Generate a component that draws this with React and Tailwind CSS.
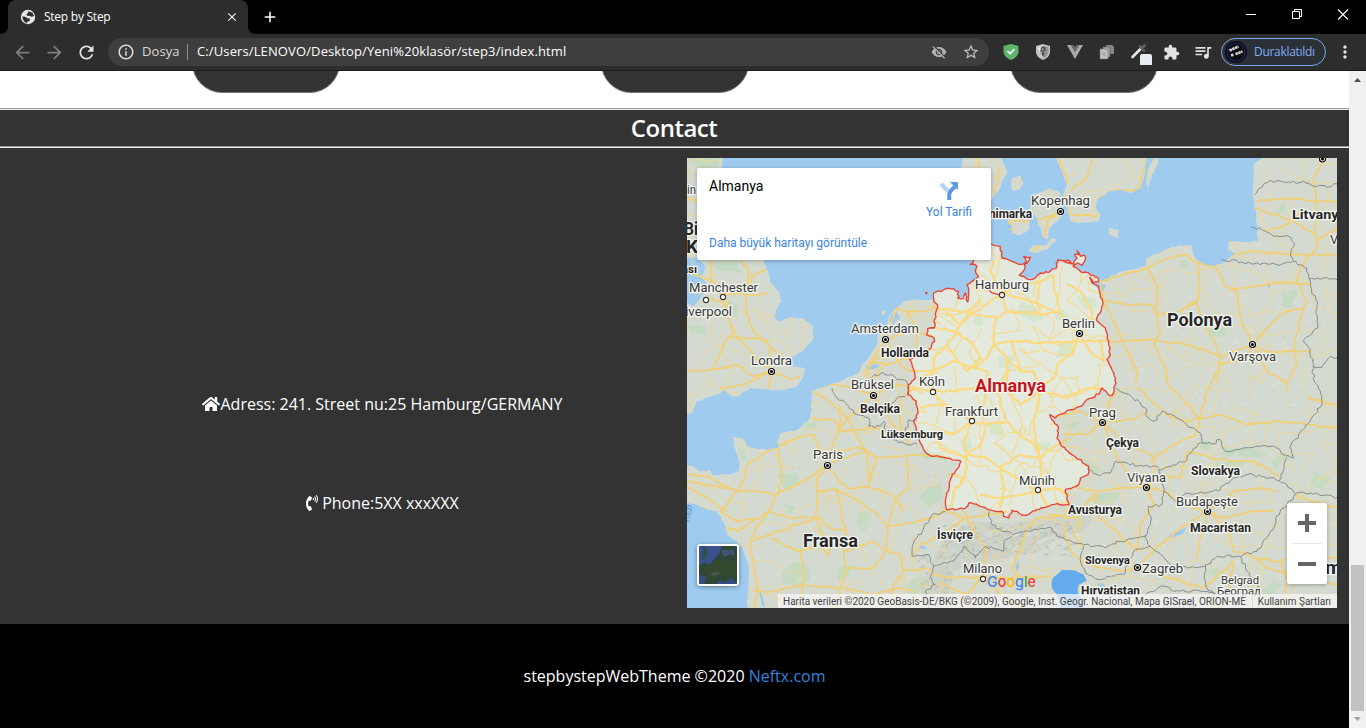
import React from "react";
import {
  MdArrowBack, MdArrowForward, MdRefresh, MdInfoOutline, MdVisibilityOff, MdStarBorder,
  MdExtension, MdQueueMusic, MdPublic, MdClose, MdAdd, MdMoreVert,
} from "react-icons/md";
import { FaHome, FaPhoneVolume } from "react-icons/fa";

/* ---------- map geometry (drawn at three units per pixel) ---------- */

function rng(seed) {
  let s = seed;
  return () => {
    s = (s * 16807) % 2147483647;
    return s / 2147483647;
  };
}

function parse(str) {
  return str.trim().split(/\s+/).map((p) => p.split(",").map(Number));
}

function wiggle(str, amp, step, close) {
  const pts = parse(str);
  if (close) pts.push(pts[0]);
  const r = rng(Math.round(pts[0][0] * 31 + pts[0][1] * 17 + pts.length * 97) + 11);
  let d = `M${pts[0][0]},${pts[0][1]}`;
  for (let i = 1; i < pts.length; i++) {
    const [x0, y0] = pts[i - 1];
    const [x1, y1] = pts[i];
    const n = Math.max(1, Math.round(Math.hypot(x1 - x0, y1 - y0) / step));
    for (let k = 1; k <= n; k++) {
      const t = k / n;
      const j = k === n ? 0 : amp;
      d += `L${(x0 + (x1 - x0) * t + (r() - 0.5) * 2 * j).toFixed(1)},${(y0 + (y1 - y0) * t + (r() - 0.5) * 2 * j).toFixed(1)}`;
    }
  }
  return close ? d + "Z" : d;
}

const LAND = [
  "-10,-10 105,-10 108,0 100,40 150,100 200,200 230,306 245,345 250,375 275,400 285,430 268,455 262,480 280,490 310,478 345,480 378,505 378,545 345,580 310,600 300,622 328,626 355,632 350,655 330,685 290,697 245,695 190,690 150,717 135,715 115,697 75,715 30,730 15,765 -10,773",
  "830,-10 820,40 830,150 850,230 850,306 870,325 865,345 875,355 855,372 842,380 845,410 815,420 812,400 775,393 740,405 742,428 690,425 650,430 628,450 605,475 600,510 575,512 570,560 545,600 525,620 520,640 495,655 440,676 375,700 370,780 345,805 320,820 280,825 270,850 275,870 240,877 180,865 165,840 135,835 145,875 155,905 155,940 130,950 75,950 70,935 40,940 20,925 -10,925 -10,1030 30,1040 60,1055 90,1060 100,1075 115,1105 120,1130 150,1150 160,1165 175,1195 185,1220 185,1275 180,1360 1960,1360 1960,-10 1735,-10 1700,20 1697,100 1703,150 1710,200 1712,250 1665,252 1625,250 1623,275 1645,285 1615,312 1580,325 1535,310 1520,290 1515,262 1475,262 1435,275 1380,300 1375,325 1305,340 1245,370 1220,350 1205,345 1180,340 1160,312 1125,305 1110,325 1090,340 1060,345 1045,362 1000,355 1010,330 1000,320 975,310 945,300 940,265 912,258 905,215 912,130 940,90 960,40 940,-10",
  "1105,-10 1125,40 1140,80 1130,110 1140,150 1150,190 1175,195 1235,190 1240,170 1225,150 1230,125 1260,105 1295,95 1335,105 1360,90 1375,40 1380,-10",
  "1040,110 1090,90 1120,105 1125,170 1110,190 1085,215 1085,245 1065,235 1050,180 1025,165",
  "1025,275 1045,262 1080,260 1095,240 1110,245 1080,275 1040,285",
  "965,170 1000,160 1030,185 1025,215 1000,232 965,225",
  "975,60 1000,52 1010,75 995,95 975,98",
  "1405,-10 1415,10 1395,50 1382,92 1378,60 1388,20",
  "1268,208 1296,216 1293,242 1265,230",
  "585,460 595,455 592,470 585,470",
];

const GERMANY =
  "912,258 940,265 945,300 975,310 1000,320 1018,312 1010,295 1030,297 1020,315 1012,320 1012,335 997,352 1035,365 1045,360 1060,345 1090,340 1110,325 1112,305 1150,310 1152,318 1130,310 1160,320 1170,300 1163,290 1175,290 1170,278 1180,295 1193,292 1195,305 1185,322 1172,315 1158,325 1180,340 1205,345 1212,352 1232,358 1235,370 1215,375 1208,358 1220,378 1235,385 1240,410 1247,440 1240,465 1228,485 1255,510 1265,550 1270,590 1260,605 1280,645 1287,675 1275,713 1262,708 1245,690 1237,708 1205,722 1180,745 1140,758 1105,780 1088,770 1095,785 1115,810 1110,840 1125,865 1155,890 1205,925 1203,950 1180,960 1175,980 1135,995 1140,1020 1147,1040 1095,1040 1050,1055 1015,1072 990,1060 975,1057 965,1080 950,1075 945,1060 925,1060 880,1045 845,1035 835,1050 780,1055 775,1030 790,965 822,910 780,900 725,890 700,855 690,820 680,790 693,765 688,730 665,710 665,680 685,660 675,620 668,605 725,575 743,550 735,535 718,530 722,512 742,510 745,470 752,440 740,430 740,405 775,393 800,392 815,400 812,420 828,422 835,405 842,432 845,400 840,380 855,370 875,355 865,340 870,325 850,320 860,306 880,270";

const WATERS = [
  "-10,300 35,300 55,330 45,360 62,385 45,415 20,445 -10,425",
  "612,470 630,462 640,480 618,500 608,492",
  "1095,1265 1125,1235 1165,1238 1190,1250 1200,1268 1175,1280 1172,1300 1185,1330 1195,1360 1125,1360 1110,1310 1095,1290",
  "1225,368 1240,375 1256,382 1250,400 1235,395 1222,378",
  "1443,1135 1490,1110 1500,1108 1490,1125 1450,1142",
  "690,1168 705,1162 728,1170 712,1174",
  "120,1180 165,1165 172,1190 185,1225 182,1260 160,1240",
  "905,190 925,170 955,185 975,205 975,240 950,225 925,205",
  "535,625 570,618 580,628 548,634",
  "1738,380 1752,378 1748,390 1738,388",
  "212,1285 225,1310 235,1350 224,1340",
  "1230,1280 1250,1275 1255,1290 1240,1295",
  "985,1225 995,1205 998,1230 988,1240",
];

const GREENS = [
  "0,0 95,0 90,30 30,30", "60,306 150,306 165,345 120,340 85,330", "5,500 60,505 55,530 10,525", "120,430 150,440 155,480 135,475",
  "145,860 175,875 180,920 160,900", "345,795 395,790 375,812", "510,1070 545,1060 550,1090 530,1120 512,1105", "290,1235 330,1215 365,1225 365,1270 325,1290 285,1265",
  "450,1230 500,1220 490,1250 455,1270", "285,1040 325,1050 310,1065", "700,1015 760,965 770,1020 720,1045", "700,880 760,885 780,905 720,905", "270,950 330,940 330,980 290,990",
  "1000,430 1040,440 1075,480 1040,490 990,470", "1090,460 1130,455 1150,480 1110,485", "1170,410 1220,420 1235,450 1190,450", "1115,560 1160,550 1150,590 1110,600", "1480,310 1500,305 1498,335 1482,330",
  "1560,515 1620,510 1610,535 1570,535", "1780,405 1835,395 1820,445 1790,450", "1185,900 1230,925 1270,940 1225,950 1205,940", "1125,800 1185,790 1150,815", "1610,870 1700,870 1750,890 1680,900 1600,895",
  "1590,915 1680,910 1660,930 1580,935", "1745,915 1790,880 1810,900 1760,930", "1755,170 1795,130 1790,165", "1540,845 1580,850 1570,875 1540,870",
  "820,850 850,840 855,870 830,880", "900,800 940,795 950,830 910,830", "1040,860 1090,850 1080,890", "930,600 980,590 970,640 935,630", "1700,1320 1760,1270 1790,1280 1730,1330",
  "1880,940 1930,960 1910,1000 1870,980", "650,1290 700,1250 730,1270 680,1320", "1215,1010 1300,1005 1280,1035 1220,1035", "1560,1240 1600,1225 1590,1260", "860,480 890,470 890,500 865,505",
];

const BORDERS = [
  "1703,110 1735,75 1770,68 1810,75 1850,70 1880,85 1920,88 1950,78",
  "1692,207 1725,215 1760,235 1805,235 1822,255 1810,290 1818,310 1860,330 1870,380 1890,440 1892,510 1850,545 1870,575 1880,620 1875,640 1885,675 1900,705 1905,740 1870,790 1835,830 1808,870 1820,900",
  "1602,304 1700,318 1780,320 1815,312", "1865,363 1910,360 1950,365", "1877,625 1905,628 1925,600 1950,598",
  "1285,690 1320,708 1360,735 1380,755 1375,770 1400,790 1425,760 1470,780 1500,800 1540,825 1550,855",
  "1550,855 1575,858 1600,845 1615,880 1670,870 1730,862 1770,870 1790,890 1820,900",
  "1205,935 1230,950 1270,945 1285,910 1320,915 1370,925 1415,930",
  "1415,935 1460,920 1500,905 1520,870 1550,855", "1415,935 1425,975 1430,1000 1465,1030 1500,1005 1550,1005 1600,995 1640,960 1680,950 1730,955 1775,968 1800,900",
  "1775,968 1800,980 1825,1008 1870,1005 1950,1018", "1825,1008 1780,1060 1750,1120 1710,1180 1655,1195 1590,1195 1560,1220 1500,1230 1450,1220 1390,1165 1375,1130",
  "1430,1000 1425,1040 1385,1045 1390,1100 1375,1135 1300,1150 1255,1170 1190,1160 1110,1135 1095,1110 1025,1120 975,1130",
  "775,1060 735,1070 710,1110 680,1155 675,1195 725,1190 740,1225 800,1210 830,1165 865,1200 895,1165 950,1180 955,1145 975,1135",
  "740,1225 730,1255 745,1280 715,1300 725,1350", "905,1060 915,1100 945,1120 975,1125",
  "435,690 450,720 485,745 500,765 545,780 545,805 580,805 590,790 600,830 635,855 690,858", "655,820 665,785 690,790",
  "550,660 590,645 615,650 630,665 660,670 665,715", "655,715 630,720 600,765",
  "1390,1165 1345,1175 1310,1250 1260,1255 1240,1265 1195,1245 1180,1200 1190,1165",
  "1555,1220 1555,1280 1580,1310 1600,1350", "1360,1320 1420,1285 1480,1300 1560,1300 1600,1310", "1660,1195 1680,1240 1720,1300 1710,1350",
];

const ROADS = [
  "0,340 40,355 80,370 110,400 120,440 130,500 150,540 180,570 205,600 255,640", "160,306 185,340 180,400 175,460 200,520 245,560 255,640",
  "90,405 180,410 240,405", "255,640 200,655 150,620 80,635 0,640", "255,640 310,665 340,655", "255,640 245,690", "255,640 170,680 100,690", "60,425 110,430 140,520 110,560 80,635", "130,540 200,540 250,550", "75,306 70,380", "240,335 200,350 185,390", "0,120 30,130", "240,560 280,590 300,620",
  "600,545 620,590 640,620 665,640 690,640 740,640", "600,545 640,530 690,520 740,540", "620,440 660,460 720,460 745,440", "620,590 570,600 540,640 545,675", "600,545 560,600 530,650", "630,450 610,500 600,545", "660,460 690,520 690,570", "545,610 600,620 670,600",
  "560,712 600,690 640,680 690,690 740,700", "560,712 500,690 440,680 380,690", "560,712 520,750 480,780 455,820 430,880", "560,712 590,760 640,830 670,860", "560,712 560,660 590,620",
  "423,920 395,870 380,830 300,850 275,865", "423,920 470,900 540,880 545,960 545,985", "423,920 380,950 330,980 270,1010 200,1000 150,1000 90,985 0,970", "423,920 450,960 480,990 540,985 590,1000 625,1020 650,1060",
  "423,920 390,960 388,1080 400,1120 425,1150 425,1190", "390,1000 450,995 500,1020 560,1060 600,1105", "450,995 465,1080 480,1120 470,1180", "320,845 240,880 180,920 165,975 150,1000", "275,870 285,960 270,1010 245,1060 215,1100 190,1150",
  "430,880 520,870 570,900 700,890 780,900", "455,820 560,810 640,830", "460,745 455,820", "380,700 440,740 480,780", "480,780 530,870 570,900", "660,900 665,990 625,1020 610,1080 600,1105 600,1180", "780,1055 740,1080 640,1100 600,1105",
  "245,1060 310,1080 400,1080", "150,1000 100,1060 150,1090 215,1080 245,1060", "190,1150 250,1130 330,1100 400,1080", "190,1150 200,1220 215,1300 200,1350", "215,1080 150,1120 120,1110", "470,1180 480,1230 460,1290 450,1350", "480,1230 560,1230 600,1180 640,1190 650,1240 620,1280 610,1350", "200,1300 260,1300 340,1280 460,1290",
  "650,1240 720,1230 740,1250", "600,1180 560,1150 500,1170 470,1180", "340,1180 350,1240 345,1350", "250,1140 330,1180 400,1160 425,1190", "0,985 60,1020 120,1060",
  "470,1290 560,1310 640,1290 680,1300", "690,690 640,720 640,780 640,830", "400,1080 430,1110 480,1120", "545,985 560,930 570,900", "0,950 60,955 150,1000", "370,780 440,785 455,820",
  "945,405 900,440 855,465 820,500 780,560 740,600 740,640", "945,405 930,380 910,340 920,306", "945,405 1000,380 1060,370 1100,350", "945,405 960,460 930,480 920,520 920,560 960,600 1000,640", "945,405 1000,420 1060,440 1110,460 1150,500 1177,525",
  "740,640 700,660 730,680 750,720 800,760 855,790", "740,640 800,610 860,630 900,600 920,560 980,550 1100,555 1177,550", "1177,525 1160,580 1110,620 1100,660 1060,690", "1177,525 1220,490 1210,450 1180,400 1140,380", "1177,525 1210,580 1250,610 1240,550",
  "1100,350 1100,380 1120,460", "840,640 880,600 860,560 800,520 750,510", "855,790 830,850 840,900 835,960 800,1000 790,1055", "855,790 900,800 960,790 1000,830 1040,860 1060,900", "855,790 890,740 900,680 900,640 860,630", "855,790 800,830 750,820 700,840", "840,890 900,900 940,930 990,960 1050,1000 1060,960",
  "1060,900 1050,860 1040,790 1060,700 1040,640 1000,640 975,550", "1060,900 1110,860 1150,840", "1060,1000 1060,960 1060,900 1000,890 940,930", "1060,1000 1100,990 1150,1010", "1060,1000 1080,1050", "1060,1000 1000,1010 940,1020 880,1010", "960,600 960,700 1000,740 1060,700 1140,720 1200,690 1250,690",
  "840,890 880,860 900,800", "780,560 840,640", "740,700 800,700 860,690 900,680 960,700", "750,820 760,870 840,900", "940,930 950,1000 940,1050", "775,460 820,500 880,420", "740,450 855,465 930,480", "1060,370 1050,430 1060,470", "1120,460 1060,470 960,460", "700,750 760,740 800,760", "960,640 930,700 950,760 960,790", "835,960 780,950",
  "1240,365 1250,430 1275,480 1300,530 1330,600 1350,640 1345,675", "1255,430 1320,440 1390,440 1410,470 1480,460 1520,430", "1177,550 1250,548 1300,550 1400,545 1500,560 1560,580 1600,595 1696,560", "1535,310 1535,380 1530,430 1540,480 1560,520 1590,570 1600,595 1590,675", "1245,370 1310,350 1380,330 1440,300 1500,290 1520,310 1580,325 1600,350 1610,380 1650,400 1660,480 1696,560",
  "1696,560 1750,500 1800,460 1850,450", "1696,560 1740,580 1870,580", "1696,560 1740,640 1800,675 1800,700", "1696,560 1680,600 1600,620", "1380,330 1410,380 1410,470 1420,520 1400,560 1440,640 1440,675 1500,740 1540,780",
  "1480,460 1540,420", "1580,325 1640,290 1700,280 1800,290 1950,290", "1700,150 1780,175 1840,200 1885,230 1890,270 1840,330 1830,370 1860,430 1840,480 1820,560 1830,620 1800,675", "1630,395 1700,385 1780,375 1870,380", "1885,250 1950,210", "1710,130 1800,120 1900,130 1950,130", "1910,0 1880,60 1890,140 1885,230", "1735,220 1800,200 1840,160",
  "1540,780 1600,770 1680,800 1780,790 1880,800 1950,810", "1540,780 1560,700 1590,640", "1540,780 1490,790 1440,770 1350,690", "1540,780 1530,830 1460,860 1400,900 1390,910", "1246,793 1180,760 1110,775", "1246,793 1200,830 1130,830", "1246,793 1300,840 1370,880 1400,900 1405,930 1390,990", "1246,793 1340,785 1380,760", "1246,793 1270,720 1290,700", "1246,793 1290,900 1320,940 1378,988",
  "1378,988 1300,990 1230,1000 1170,990", "1378,988 1400,1040 1360,1100 1350,1180", "1378,988 1430,1000 1500,1045 1561,1060", "1378,988 1420,950 1480,960 1500,880 1600,905 1700,910 1780,960", "1561,1060 1620,1110 1640,1180 1690,1190", "1561,1060 1540,1140 1530,1200", "1561,1060 1640,1000 1720,990 1770,1000", "1561,1060 1480,1110 1400,1180 1350,1230", "1561,1060 1600,1080 1700,1060 1760,1060",
  "1350,1230 1450,1260 1550,1290 1640,1210", "1350,1230 1310,1240 1200,1220 1150,1180 1130,1100", "1690,1190 1740,1230 1830,1260 1950,1280", "1640,1210 1620,1300 1600,1350", "1700,1200 1780,1210 1880,1190 1950,1200", "1780,1210 1800,1260 1790,1350", "1825,1010 1900,1040 1950,1050", "1860,720 1950,740", "885,1255 800,1260 740,1250", "885,1255 960,1260 1090,1255", "885,1255 840,1310 780,1350", "885,1255 900,1180 850,1100 830,1060", "885,1255 940,1310 1000,1350",
  "780,1060 830,1080 900,1070 960,1060", "830,1080 780,1120 700,1160 680,1190", "1150,1040 1130,1075 1050,1080 1015,1120 1000,1180 975,1230 1000,1260", "1150,1040 1180,1090 1160,1130 1190,1170", "1230,1070 1230,1000 1160,1080 1080,1070", "1230,1070 1300,1130 1350,1180",
  "1115,0 1140,60 1130,110 1150,170 1230,175", "1150,100 1200,60 1215,0", "1230,125 1290,95 1350,95 1365,50 1380,0", "1120,160 1080,190 1070,250 1040,280", "975,190 1030,190 1060,185 1120,160", "870,0 880,30", "940,30 925,90 930,140 960,190 975,200", "905,240 975,240", "760,1270 790,1290 840,1310",
];

function minorRoads() {
  const r = rng(4242);
  const step = 58;
  const cols = Math.ceil(1950 / step) + 1;
  const rows = Math.ceil(1350 / step) + 1;
  const node = [];
  for (let j = 0; j < rows; j++) {
    node.push([]);
    for (let i = 0; i < cols; i++) node[j].push([i * step + (r() - 0.5) * 50, j * step + (r() - 0.5) * 50]);
  }
  let d = "";
  const link = (a, b) => {
    const m1 = [(a[0] * 2 + b[0]) / 3 + (r() - 0.5) * 16, (a[1] * 2 + b[1]) / 3 + (r() - 0.5) * 16];
    const m2 = [(a[0] + b[0] * 2) / 3 + (r() - 0.5) * 16, (a[1] + b[1] * 2) / 3 + (r() - 0.5) * 16];
    d += `M${a.map(Math.round)}L${m1.map(Math.round)}L${m2.map(Math.round)}L${b.map(Math.round)}`;
  };
  for (let j = 0; j < rows - 1; j++)
    for (let i = 0; i < cols - 1; i++) {
      if (r() < 0.5) link(node[j][i], node[j][i + 1]);
      if (r() < 0.5) link(node[j][i], node[j + 1][i]);
      if (r() < 0.12) link(node[j][i], node[j + 1][i + 1]);
    }
  return d;
}

function relief(x0, y0, w, h, n, seed) {
  const r = rng(seed);
  let d = "";
  for (let i = 0; i < n; i++) {
    const x = x0 + r() * w;
    const y = y0 + r() * h;
    const a = 4 + r() * 14;
    d += `M${x.toFixed(0)},${y.toFixed(0)}l${a.toFixed(0)},${(-a * (0.3 + r())).toFixed(0)}l${(3 + r() * 6).toFixed(0)},${(2 + r() * 8).toFixed(0)}z`;
  }
  return d;
}

const landPath = LAND.map((p) => wiggle(p, 2.5, 12, true)).join("");
const germanyPath = wiggle(GERMANY, 3, 8, true);
const borderPath = BORDERS.map((p) => wiggle(p, 4.5, 9)).join("");
const roadPath = ROADS.map((p) => wiggle(p, 3.2, 14)).join("");
const minorPath = minorRoads();

const CITIES = [
  ["in", 0, 35.5, 9], ["Manchester", 2, 133.5, 69], ["Liverpool", -9, 157.5, 54], ["Londra", 64, 206.5, 41], ["Amsterdam", 164, 174.5, 68],
  ["Brüksel", 164, 230.5, 43], ["Köln", 232, 227.5, 26], ["Frankfurt", 258, 257.5, 53], ["Paris", 126, 300.5, 30], ["Milano", 276, 414.5, 39],
  ["Kopenhag", 344, 46.5, 59], ["Vilnius", 643, 86, 38], ["Hamburg", 288, 130.5, 54], ["Berlin", 375, 169.5, 33], ["Varşova", 542, 202.5, 47],
  ["Prag", 402, 258.5, 27], ["Viyana", 440, 323.5, 39], ["Münih", 332, 326.5, 36], ["Budapeşte", 489, 347.5, 62], ["Zagreb", 455, 414.5, 41],
  ["Belgrad", 534, 425.5, 38, 11.5], ["Београд", 530, 437, 44, 11.5],
];
const COUNTRIES = [
  ["Hollanda", 194, 199, 48, 12], ["Belçika", 173, 254.5, 40, 12], ["Lüksemburg", 194, 280, 62, 11], ["İsviçre", 250, 381, 36, 12],
  ["Danimarka", 288, 60, 57, 12], ["Litvanya", 605, 61, 54, 13], ["Çekya", 419, 289, 33, 12], ["Slovakya", 504, 317, 49, 12],
  ["Avusturya", 381, 355.5, 54, 12], ["Macaristan", 503, 374, 61, 12], ["Slovenya", 398, 405.5, 45, 11], ["Hırvatistan", 394, 436.5, 59, 12],
  ["Polonya", 480, 167.5, 65, 18], ["Fransa", 116, 389, 55, 18], ["Bi", -3, 77, 14, 18], ["K", -1, 95, 12, 18], ["ası", -5, 114.5, 15, 11], ["m", 638, 416, 17, 18],
];
const TOWNS = [[19, 142], [36, 139], [315, 137], [246, 234], [285, 263], [351, 332], [296, 421]];
const CAPITALS = [[84.5, 213.5], [198.5, 181.5], [186.5, 237.5], [140.5, 307.5], [373.5, 53.5], [392.5, 175.5], [565.5, 186.5], [415.5, 264.5], [459.5, 329.5], [520.5, 353.5], [450.5, 409.5], [635.5, 1]];

function MapDrawing() {
  return (
    <svg viewBox="0 0 650 450" className="block h-[450px] w-[650px] font-['Roboto',sans-serif]">
      <defs>
        <clipPath id="land"><path d={landPath} /></clipPath>
        <clipPath id="germany"><path d={germanyPath} /></clipPath>
      </defs>
      <g transform="scale(0.33333)">
        <rect width="1950" height="1350" fill="#9fcbef" />
        <path d={landPath} fill="#d5dad0" />
        <g clipPath="url(#land)">
          <path d={GREENS.map((p) => wiggle(p, 5, 14, true)).join("")} fill="#c1d9bf" opacity="0.85" />
          <path d={relief(1150, 420, 780, 900, 260, 91)} fill="#dfe3df" opacity="0.6" />
          <path d={relief(200, 900, 600, 420, 80, 17)} fill="#dfe3dc" opacity="0.6" />
          <path d="M720,1350L700,1290L740,1200L780,1130L860,1090L960,1095L1060,1085L1160,1060L1220,1080L1190,1120L1110,1140L1060,1180L960,1200L880,1215L800,1240L780,1350Z" fill="#c9cfc7" opacity="0.6" />
          <path d={relief(760, 1100, 400, 100, 130, 5)} fill="#aeb6af" opacity="0.5" />
          <path d={relief(760, 1100, 400, 120, 90, 77)} fill="#dbe0d9" opacity="0.7" />
          <path d={relief(690, 1200, 100, 150, 40, 8)} fill="#b1bab0" opacity="0.5" />
        </g>
        <path d={germanyPath} fill="#e4e9dd" />
        <g clipPath="url(#germany)">
          <path d={GREENS.map((p) => wiggle(p, 5, 14, true)).join("")} fill="#cfe5cb" opacity="0.8" />
        </g>
        <path d={WATERS.map((p) => wiggle(p, 2, 12, true)).join("")} fill="#9fcbef" />
        <g clipPath="url(#land)" fill="none" strokeLinejoin="round">
          <path d={minorPath} stroke="#eed68f" strokeWidth="2.8" opacity="0.85" />
          <path d={roadPath} stroke="#f0d078" strokeWidth="5.6" />
        </g>
        <g clipPath="url(#germany)" fill="none">
          <path d={minorPath} stroke="#f8dd8c" strokeWidth="3" opacity="0.85" />
          <path d={roadPath} stroke="#fbdc84" strokeWidth="6.2" />
        </g>
        <path d={wiggle(WATERS[2], 2, 12, true)} fill="#64aaee" />
        <path d={borderPath} fill="none" stroke="#898d8b" strokeWidth="3" />
        <path d={germanyPath} fill="none" stroke="#ea4335" strokeWidth="4" strokeLinejoin="round" />
        <path d="M905,395L915,405L945,412" fill="none" stroke="#ea4335" strokeWidth="4" />
        <circle cx="718" cy="405" r="4" fill="#ea4335" />
      </g>
      {TOWNS.map(([x, y]) => (
        <circle key={x} cx={x} cy={y} r="2.6" fill="#fff" stroke="#333" strokeWidth="1.1" />
      ))}
      {CAPITALS.map(([x, y]) => (
        <g key={x}>
          <circle cx={x} cy={y} r="4" fill="#fff" opacity="0.7" />
          <circle cx={x} cy={y} r="3" fill="#fff" stroke="#000" strokeWidth="1.2" />
          <circle cx={x} cy={y} r="1.5" fill="#000" />
        </g>
      ))}
      <g stroke="#f4f6f2" strokeWidth="2.6" strokeLinejoin="round" paintOrder="stroke" fill="#383838">
        {CITIES.map(([t, x, y, w, s]) => (
          <text key={t} x={x} y={y} textLength={w} lengthAdjust="spacingAndGlyphs" fontSize={s || 13.5}>{t}</text>
        ))}
        {COUNTRIES.map(([t, x, y, w, s]) => (
          <text key={t} x={x} y={y} textLength={w} lengthAdjust="spacingAndGlyphs" fontSize={s} fontWeight="700" fill="#262626">{t}</text>
        ))}
        <text x="288" y="234" textLength="71" lengthAdjust="spacingAndGlyphs" fontSize="18" fontWeight="700" fill="#c5161d">Almanya</text>
        <text x="475" y="451" textLength="33" fontSize="12" fontWeight="700" fill="#777">Bosna</text>
      </g>
      <text transform="translate(3 364) rotate(-83)" fontSize="9" fontStyle="italic" fill="#5b96d2">rfezi</text>
      <g stroke="#fff" strokeWidth="1.2" paintOrder="stroke" fontSize="15" fontWeight="500" className="font-['Inter',sans-serif]">
        <text x="300" y="429" textLength="49" lengthAdjust="spacingAndGlyphs" stroke="none">
          <tspan fill="#4285f4">G</tspan><tspan fill="#ea4335">o</tspan><tspan fill="#fbbc05">o</tspan><tspan fill="#4285f4">g</tspan><tspan fill="#34a853">l</tspan><tspan fill="#ea4335">e</tspan>
        </text>
      </g>
    </svg>
  );
}

function MapEmbed() {
  return (
    <div className="relative h-[450px] w-[650px] overflow-hidden font-['Roboto',sans-serif]">
      <MapDrawing />
      <div className="absolute left-[10px] top-[10px] flex h-[92px] w-[294px] justify-between rounded-[2px] bg-white pl-3 pr-[19px] shadow-[0_1px_4px_rgba(0,0,0,0.3)]">
        <div className="flex flex-col">
          <span className="mt-[9px] text-[14px] leading-[18px] text-black">Almanya</span>
          <span className="mt-[40px] text-[12px] leading-4 text-[#3a84df]">Daha büyük haritayı görüntüle</span>
        </div>
        <div className="flex flex-col items-center pt-[13px]">
          <svg viewBox="0 0 22 20" className="h-5 w-[22px]">
            <path d="M3 3l7 7" stroke="#b8d2f5" strokeWidth="4" fill="none" />
            <path d="M11.200 19v-5.500c0-2 .8-3 2-4.200L17 5.500" stroke="#5c9ae6" strokeWidth="4" fill="none" />
            <path d="M12 1h8v8z" fill="#5c9ae6" />
          </svg>
          <span className="mt-[3px] text-[12px] leading-4 text-[#3a84df]">Yol Tarifi</span>
        </div>
      </div>
      <div className="absolute left-[10px] top-[386px] h-[42px] w-[42px] overflow-hidden rounded-[3px] border-2 border-white bg-[#2e4737] shadow-[0_1px_4px_rgba(0,0,0,0.4)]">
        <svg viewBox="0 0 38 38" className="block h-[38px] w-[38px]">
          <path d="M0 0h23l-3 8-5 5-5 8-4-5-6 3z" fill="#3a508c" />
          <path d="M22 4l13 0 0 6-4-2-6 3z" fill="#3f5674" />
          <path d="M5 0l4 5-2 8-5 1z" fill="#314f52" />
          <path d="M0 28l7 3-2 7H0zM18 35l7 1 8-4 5 6H18z" fill="#354d80" />
          <path d="M4 22l8-5 9-4 8 3 9 0v12l-10 3-11-3-9 4z" fill="#34492d" />
          <path d="M11 27l8-2 3 3-8 2z" fill="#4b5549" />
        </svg>
      </div>
      <div className="absolute left-[600px] top-[345px] flex h-[81px] w-10 flex-col items-center rounded-[2px] bg-white shadow-[0_1px_4px_rgba(0,0,0,0.3)]">
        <svg viewBox="0 0 18 18" className="my-[11px] h-[18px] w-[18px]"><path d="M7 0h4v7h7v4h-7v7H7v-7H0V7h7z" fill="#666" /></svg>
        <div className="h-px w-[30px] bg-[#e6e6e6]" />
        <div className="mt-[18px] h-1 w-[18px] bg-[#666]" />
      </div>
      <div className="absolute bottom-0 right-0 flex h-[14px] w-[559px] items-center bg-[#f5f5f5]/75 pl-[5px] pr-[6px] text-[10px] text-[#444]">
        <span className="whitespace-nowrap">Harita verileri ©2020 GeoBasis-DE/BKG (©2009), Google, Inst. Geogr. Nacional, Mapa GISrael, ORION-ME</span>
        <span className="ml-[6px] h-full w-px bg-[#d8dbd6]" />
        <span className="ml-auto whitespace-nowrap">Kullanım Şartları</span>
      </div>
    </div>
  );
}

/* ---------- browser frame ---------- */

function Cell({ children }) {
  return <div className="flex h-full w-8 shrink-0 items-center justify-center">{children}</div>;
}

function TabStrip() {
  return (
    <div className="flex h-[34px] items-end bg-black">
      <svg viewBox="0 0 8 8" className="h-2 w-2"><path d="M8 0v8H0c5 0 8-3 8-8z" fill="#2d2d2d" /></svg>
      <div className="flex h-[34px] w-[240px] items-center rounded-t-lg bg-[#2d2d2d] pl-[12px] pr-[9px]">
        <svg viewBox="0 0 16 16" className="h-4 w-4">
          <circle cx="8" cy="8" r="7.200" fill="#e6e6e6" />
          <path d="M8.500 2.200l4 1.500 1.600 3.200-2.600.8-2.200-1-1.800.3L6.300 5.500l1.400-1.300zM2 7.500l3.200.2 2.300 1.500 2.500.6-.5 2.200-2 .6-.5 1.600-3-1.600z" fill="#2d2d2d" />
        </svg>
        <span className="ml-2 text-[12px] tracking-[-0.25px] text-white">Step by Step</span>
        <MdClose className="ml-auto h-[14px] w-[14px] text-[#f0f0f0]" />
      </div>
      <svg viewBox="0 0 8 8" className="h-2 w-2"><path d="M0 0v8h8C3 8 0 5 0 0z" fill="#2d2d2d" /></svg>
      <div className="flex h-full items-center pl-[5px]"><MdAdd className="h-[18px] w-[18px] text-white" /></div>
      <div className="ml-auto flex h-full items-start">
        <svg viewBox="0 0 138 28" className="h-7 w-[138px]" fill="none" stroke="#fff">
          <path d="M18 14.500h10" />
          <path d="M64.500 11.500h7v7h-7zM66.500 11.500v-2h7v7h-2" />
          <path d="M110 9.500l10 10M120 9.500l-10 10" strokeWidth="1.1" />
        </svg>
      </div>
    </div>
  );
}

function Toolbar() {
  return (
    <div className="flex h-[37px] items-center border-b border-[#1c1c1c] bg-[#2d2d2d] pl-[6px]">
      <Cell><MdArrowBack className="h-[21px] w-[21px] text-[#7e7e7e]" /></Cell>
      <Cell><MdArrowForward className="h-[21px] w-[21px] text-[#7e7e7e]" /></Cell>
      <Cell><MdRefresh className="h-[21px] w-[21px] text-[#e4e4e4]" /></Cell>
      <div className="ml-[6px] mr-[6px] flex h-7 w-[881px] shrink-0 items-center rounded-full bg-[#3e3e3e] pl-[9px] pr-[2px]">
        <MdInfoOutline className="h-[18px] w-[18px] text-[#dedede]" />
        <span className="ml-[7px] w-[38px] whitespace-nowrap text-[13px] tracking-[0.1px] text-[#dadada]">Dosya</span>
        <div className="ml-[7px] h-4 w-px bg-[#8c8c8c]" />
        <span className="ml-[9px] whitespace-nowrap text-[13px] tracking-[0.12px] text-white">C:/Users/LENOVO/Desktop/Yeni%20klasör/step3/index.html</span>
        <div className="ml-auto flex h-full">
          <Cell><MdVisibilityOff className="h-4 w-4 text-[#b4b4b4]" /></Cell>
          <Cell><MdStarBorder className="h-[18px] w-[18px] text-[#c2c2c2]" /></Cell>
        </div>
      </div>
      <Cell>
        <svg viewBox="0 0 16 16" className="h-4 w-4"><path d="M8 0l7.500 2v5.500c0 4-3.500 7-7.500 8.500C4 14.500.5 11.500.5 7.500V2z" fill="#5fb56b" /><path d="M4.500 7l2.700 2.800L11.500 5" stroke="#fff" strokeWidth="1.6" fill="none" /></svg>
      </Cell>
      <Cell>
        <svg viewBox="0 0 16 16" className="h-4 w-4"><path d="M8 0l7 2v5.500c0 4-3 7-7 8.500-4-1.500-7-4.500-7-8.500V2z" fill="#c4c4c4" /><path d="M8 1.500v13c3.500-1.300 5.500-3.800 5.500-7V3z" fill="#959595" /><path d="M6 8V5.500a2 2 0 014 0V7M8 5.500v6.500M6.500 9.500h3" stroke="#484848" strokeWidth="1.400" fill="none" /><path d="M3 4l3-1.500L5 8z" fill="#efefef" /></svg>
      </Cell>
      <Cell>
        <svg viewBox="0 0 16 14" className="h-[14px] w-4"><path d="M0 0h4l4 7 4-7h4L8 14z" fill="#a9a9a9" /><path d="M4 0h2.500L8 2.500 9.500 0H12L8 7z" fill="#6e6e6e" /></svg>
      </Cell>
      <Cell>
        <svg viewBox="0 0 16 16" className="h-4 w-4"><path d="M7 1h6l2 2v7H7z" fill="#858585" /><path d="M4 3h6l1 2v8H4z" fill="#a0a0a0" stroke="#666" strokeWidth=".5" /><path d="M1 5h6l2 2v8H1z" fill="#c0c0c0" stroke="#777" strokeWidth=".5" /><path d="M3 9h3M3 11h4" stroke="#999" /></svg>
      </Cell>
      <Cell>
        <svg viewBox="0 0 26 26" className="h-[26px] w-[26px] shrink-0"><path d="M6.500 18l8-8" stroke="#e6e6e6" strokeWidth="2.600" strokeLinecap="round" /><path d="M14 7.500l4 4M16 9l2.500-2.500" stroke="#606060" strokeWidth="2.800" strokeLinecap="round" /><rect x="14" y="15" width="12" height="12" rx="2" fill="#e8edf2" /></svg>
      </Cell>
      <Cell><MdExtension className="h-[17px] w-[17px] text-[#e2e2e2]" /></Cell>
      <Cell><MdQueueMusic className="h-5 w-5 text-[#e2e2e2]" /></Cell>
      <div className="ml-[2px] flex h-7 w-[105px] shrink-0 items-center rounded-full border border-[#7ba7ea] bg-[#2b2f36] pl-[3px]">
        <svg viewBox="0 0 22 22" className="h-[22px] w-[22px]">
          <circle cx="11" cy="11" r="11" fill="#0b0b10" /><circle cx="11" cy="11" r="9" fill="none" stroke="#25256e" strokeWidth="1.200" />
          <path d="M4.500 9.500l9-4M6 14.500l3-1M10.500 13l7-2.500" stroke="#d9d9d9" strokeWidth="2.600" strokeDasharray="2.500 .5" />
        </svg>
        <span className="ml-[7px] text-[12px] tracking-[-0.3px] text-[#82aef4]">Duraklatıldı</span>
      </div>
      <div className="flex flex-1 justify-center pr-[3px]"><MdMoreVert className="h-5 w-5 text-[#e2e2e2]" /></div>
    </div>
  );
}

function Rule() {
  return <div className="h-[2px] border-t border-[#9a9a9a] bg-[#eeeeee]" />;
}

export default function App() {
  return (
    <div className="flex h-[728px] w-[1366px] flex-col overflow-hidden bg-black font-['Open_Sans','Noto_Sans',sans-serif]">
      <TabStrip />
      <Toolbar />
      <div className="flex min-h-0 flex-1">
        <div className="flex w-[1349px] flex-col text-white">
          <div className="flex h-[37px] items-start gap-[261px] bg-white pl-[192px]">
            {[0, 1, 2].map((i) => (
              <div key={i} className="flex h-[22px] w-[148px] items-end overflow-hidden">
                <div className="h-[80px] w-full shrink-0 rounded-[30px] border border-[#767676] bg-[#333]" />
              </div>
            ))}
          </div>
          <Rule />
          <div className="flex h-9 items-center justify-center bg-[#333] pr-px">
            <h2 className="text-[24px] font-semibold tracking-[-0.5px]">Contact</h2>
          </div>
          <Rule />
          <div className="flex h-[476px] bg-[#333] pl-[79px] pt-[10px]">
            <div className="mr-px flex w-[607px] flex-col items-center pt-[234px] text-[16px] leading-6">
              <p className="flex items-center"><FaHome className="h-[18px] w-[18px]" />Adress: 241. Street nu:25 Hamburg/GERMANY</p>
              <p className="mt-[75px] flex items-center"><FaPhoneVolume className="mr-1 h-4 w-3" />Phone:5XX xxxXXX</p>
            </div>
            <MapEmbed />
          </div>
          <div className="flex flex-1 items-center justify-center bg-black">
            <p className="text-[16px]">stepbystepWebTheme ©2020 <span className="text-[#2f86dc]">Neftx.com</span></p>
          </div>
        </div>
        <div className="flex w-[17px] flex-col items-center bg-[#f1f1f1]">
          <svg viewBox="0 0 17 17" className="h-[17px] w-[17px]"><path d="M5 11l3.500-4 3.500 4z" fill="#505050" /></svg>
          <div className="mt-[477px] h-[146px] w-[13px] bg-[#c1c1c1]" />
          <svg viewBox="0 0 17 17" className="h-[17px] w-[17px]"><path d="M5 6l3.500 4L12 6z" fill="#a3a3a3" /></svg>
        </div>
      </div>
    </div>
  );
}
